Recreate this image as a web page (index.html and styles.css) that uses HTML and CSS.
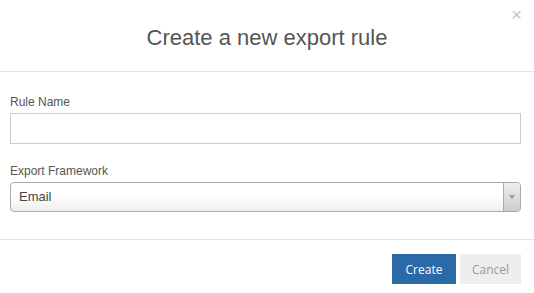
FILE: index.html
```html
<!DOCTYPE html>
<html lang="en">
<head>
    <meta charset="UTF-8">
    <meta name="viewport" content="width=device-width, initial-scale=1.0">
    <title>Create a new export rule</title>
    <link rel="stylesheet" href="styles.css">
</head>
<body>
    <div class="modal">
        <div class="modal-header">
            <button class="close" type="button">&times;</button>
            <h2>Create a new export rule</h2>
        </div>

        <div class="modal-body">
            <div class="field">
                <label for="rule_name">Rule Name</label>
                <input id="rule_name" type="text">
            </div>
            <div class="field">
                <label for="framework">Export Framework</label>
                <div class="select">
                    <span class="select-value">Email</span>
                    <span class="select-arrow"></span>
                </div>
            </div>
        </div>

        <div class="modal-footer">
            <button class="btn btn-primary" type="button">Create</button>
            <button class="btn btn-default" type="button">Cancel</button>
        </div>
    </div>
</body>
</html>
```

FILE: styles.css
```css
body {
    margin: 0;
    background: #fff;
    font-family: "Liberation Sans", Arial, sans-serif;
    color: #555;
}
.modal {
    width: 534px;
    background: #fff;
}
.modal-header {
    position: relative;
    height: 72px;
    border-bottom: 1px solid #e5e5e5;
    box-sizing: border-box;
}
.modal-header h2 {
    margin: 0;
    padding-top: 25px;
    text-align: center;
    font-size: 22px;
    font-weight: normal;
    color: #555;
    line-height: 26px;
}
.close {
    position: absolute;
    top: 4px;
    right: 12px;
    border: none;
    background: none;
    padding: 0;
    font-family: "Liberation Sans", Arial, sans-serif;
    font-size: 19px;
    color: #c8c8c8;
    cursor: pointer;
}
.modal-body {
    padding: 23px 13px 27px 10px;
    display: flex;
    flex-direction: column;
    gap: 20px;
}
.field label {
    display: block;
    font-size: 12px;
    color: #555;
    margin-bottom: 4px;
    line-height: 14px;
}
.field input {
    display: block;
    width: 100%;
    height: 31px;
    box-sizing: border-box;
    border: 1px solid #ccc;
    border-radius: 0;
    padding: 0 8px;
    font-family: inherit;
    font-size: 13px;
}
.select {
    display: flex;
    height: 30px;
    box-sizing: border-box;
    border: 1px solid #aaa;
    border-radius: 4px;
    background: linear-gradient(to bottom, #fff 45%, #eee 100%);
    overflow: hidden;
}
.select-value {
    flex: 1;
    padding-left: 8px;
    font-size: 13px;
    line-height: 28px;
    color: #444;
}
.select-arrow {
    width: 16px;
    border-left: 1px solid #aaa;
    background: linear-gradient(to bottom, #eee 0%, #ccc 100%);
    position: relative;
}
.select-arrow::after {
    content: "";
    position: absolute;
    left: 5px;
    top: 12px;
    border-left: 3px solid transparent;
    border-right: 3px solid transparent;
    border-top: 4px solid #999;
}
.modal-footer {
    border-top: 1px solid #e5e5e5;
    padding: 14px 13px 14px 0;
    display: flex;
    justify-content: flex-end;
    gap: 4px;
}
.btn {
    height: 30px;
    border: none;
    border-radius: 0;
    font-family: "Open Sans", sans-serif;
    font-size: 12px;
    cursor: pointer;
}
.btn-primary {
    width: 64px;
    background: #2a6aa8;
    color: #fff;
}
.btn-default {
    width: 61px;
    background: #eeeeee;
    color: #999;
}
```
